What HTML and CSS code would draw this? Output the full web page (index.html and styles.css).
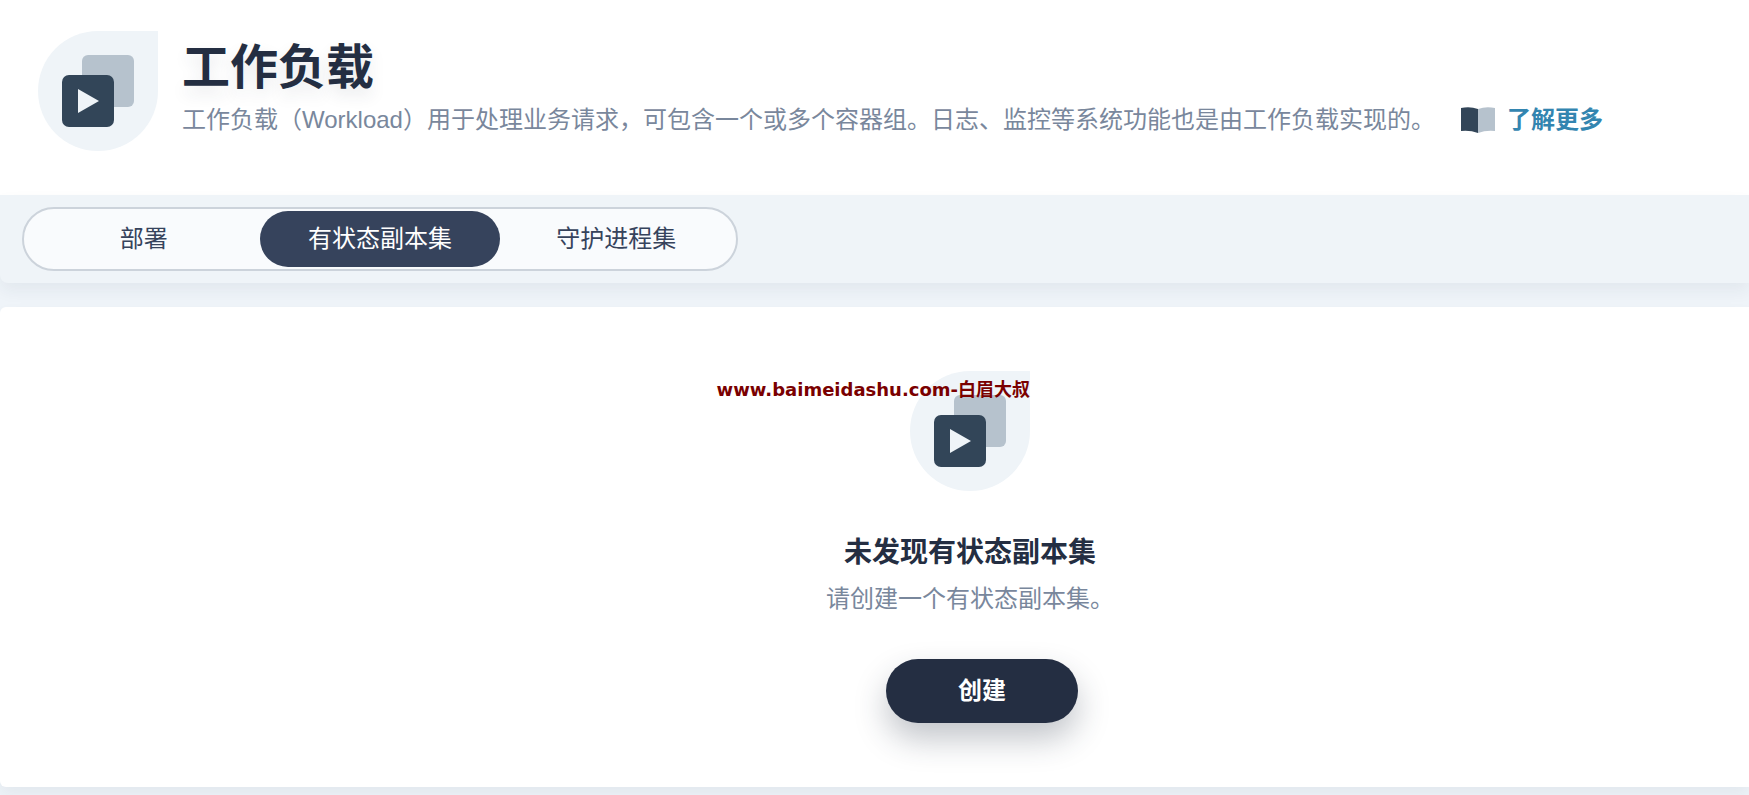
FILE: index.html
```html
<!DOCTYPE html>
<html lang="zh-CN">
<head>
    <meta charset="UTF-8">
    <title>工作负载</title>
    <link rel="stylesheet" href="styles.css">
</head>
<body>
    <header class="banner">
        <svg class="workload-icon" viewBox="0 0 120 120" aria-hidden="true">
            <path d="M60 0H120V60A60 60 0 1 1 60 0Z" fill="#eff4f8"/>
            <rect x="44" y="24" width="52" height="52" rx="6" fill="#b6c2cd"/>
            <rect x="24" y="44" width="52" height="52" rx="7" fill="#324558"/>
            <path d="M40 58L61 70L40 82Z" fill="#eff4f8"/>
        </svg>
        <div class="banner-text">
            <h1>工作负载</h1>
            <p>
                <span>工作负载（Workload）用于处理业务请求，可包含一个或多个容器组。日志、监控等系统功能也是由工作负载实现的。</span>
                <a class="more" href="#">
                    <svg class="book-icon" viewBox="0 0 34 26" aria-hidden="true">
                        <path d="M0 1Q9 -1 17 2V26Q9 23 0 24Z" fill="#324558"/>
                        <path d="M17 2Q25 -1 34 1V24Q25 23 17 26Z" fill="#b6c2cd"/>
                    </svg>
                    <span>了解更多</span>
                </a>
            </p>
        </div>
    </header>

    <nav class="tab-bar">
        <div class="tabs">
            <button type="button">部署</button>
            <button type="button" class="active">有状态副本集</button>
            <button type="button">守护进程集</button>
        </div>
    </nav>

    <main class="empty">
        <div class="empty-icon">
            <svg class="workload-icon" viewBox="0 0 120 120" aria-hidden="true">
                <path d="M60 0H120V60A60 60 0 1 1 60 0Z" fill="#eff4f8"/>
                <rect x="44" y="24" width="52" height="52" rx="6" fill="#b6c2cd"/>
                <rect x="24" y="44" width="52" height="52" rx="7" fill="#324558"/>
                <path d="M40 58L61 70L40 82Z" fill="#eff4f8"/>
            </svg>
            <span class="watermark">www.baimeidashu.com-白眉大叔</span>
        </div>
        <h2>未发现有状态副本集</h2>
        <p>请创建一个有状态副本集。</p>
        <button type="button" class="create">创建</button>
    </main>
</body>
</html>
```

FILE: styles.css
```css
* {
    box-sizing: border-box;
}
body {
    margin: 0;
    font-family: "Liberation Sans", "Noto Sans CJK SC", sans-serif;
    font-size: 24px;
    line-height: 36px;
    color: #79879c;
    background-color: #eff4f9;
}
h1, h2, p {
    margin: 0;
}
button {
    font: inherit;
    border: none;
    cursor: pointer;
}
.banner {
    display: flex;
    gap: 24px;
    padding: 31px 38px 44px;
    background-color: #fff;
}
.workload-icon {
    display: block;
    flex: none;
    width: 120px;
    height: 120px;
}
.banner-text {
    padding-top: 5px;
}
.banner-text h1 {
    margin-bottom: 2px;
    font-size: 48px;
    line-height: 64px;
    color: #242e42;
    text-shadow: 0 8px 16px rgba(36, 46, 66, 0.1);
}
.banner-text p {
    display: flex;
    gap: 26px;
    white-space: nowrap;
}
.more {
    display: flex;
    align-items: center;
    gap: 12px;
    font-weight: bold;
    color: #3385b0;
    text-decoration: none;
}
.book-icon {
    width: 34px;
    height: 26px;
}
.tab-bar {
    padding: 12px 22px;
    background-color: #eff4f8;
    border-radius: 0 0 0 8px;
    box-shadow: 0 8px 16px rgba(36, 46, 66, 0.06);
}
.tabs {
    display: flex;
    width: 716px;
    height: 64px;
    padding: 2px 0;
    border: 2px solid #ccd3db;
    border-radius: 32px;
    background-color: #f9fbfd;
}
.tabs button {
    flex: 1;
    padding: 0;
    border-radius: 28px;
    color: #36435c;
    background: none;
}
.tabs .active {
    margin: 0 -3px;
    color: #fff;
    background-color: #36435c;
}
.empty {
    display: flex;
    flex-direction: column;
    align-items: center;
    margin: 24px 0 8px;
    padding: 64px 0 64px 191px;
    background-color: #fff;
    border-radius: 6px 0 0 6px;
    box-shadow: 0 8px 16px rgba(36, 46, 66, 0.06);
}
.empty-icon {
    position: relative;
    margin-bottom: 42px;
}
.watermark {
    position: absolute;
    top: 7px;
    right: 0;
    font-family: "DejaVu Sans", "Noto Sans CJK SC", sans-serif;
    font-size: 18px;
    font-weight: bold;
    line-height: 24px;
    white-space: nowrap;
    color: #7a0000;
}
.empty h2 {
    margin-bottom: 8px;
    font-size: 28px;
    line-height: 40px;
    color: #242e42;
}
.empty p {
    margin-bottom: 42px;
}
.create {
    width: 192px;
    height: 64px;
    margin-left: 24px;
    border-radius: 32px;
    font-weight: bold;
    color: #fff;
    background-color: #242e42;
    box-shadow: 0 16px 32px rgba(36, 46, 66, 0.28);
}
```
